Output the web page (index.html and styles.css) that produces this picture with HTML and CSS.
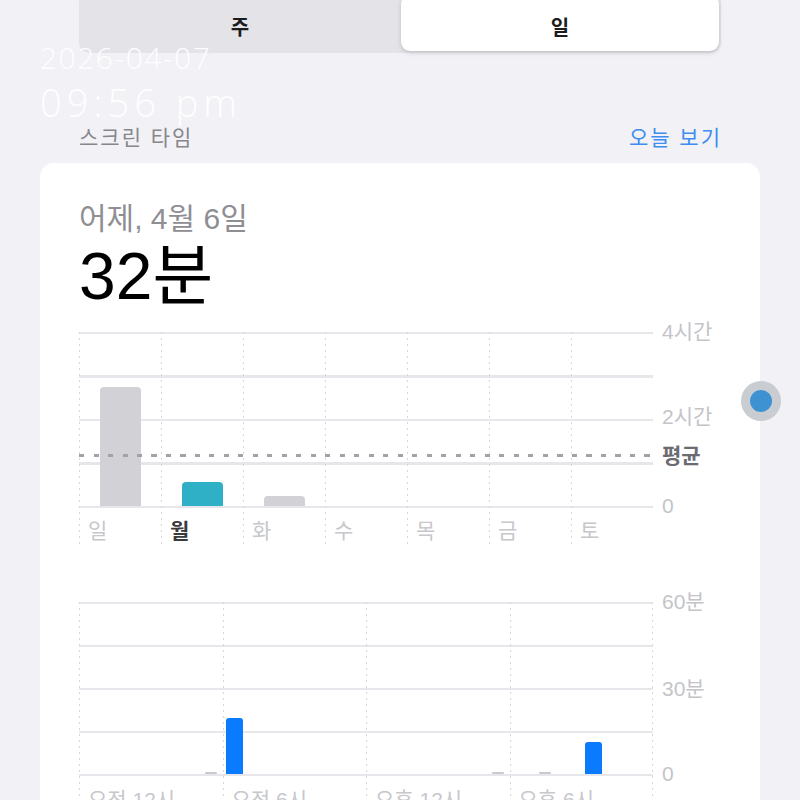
FILE: index.html
```html
<!DOCTYPE html>
<html lang="ko">
<head>
<meta charset="utf-8">
<title>스크린 타임</title>
<link rel="stylesheet" href="styles.css">
</head>
<body>
<div class="screen">
  <div class="segmented">
    <div class="seg">주</div>
    <div class="seg active">일</div>
  </div>

  <div class="section-head">
    <span class="section-title">스크린 타임</span>
    <span class="section-link">오늘 보기</span>
  </div>

  <div class="card">
    <div class="date">어제, 4월 6일</div>
    <div class="total">32분</div>

    <div class="chart week-chart">
      <div class="week-grid">
        <div class="wcol"><div class="wplot"><div class="bar gray" style="height:119px"></div></div><div class="xlabel">일</div></div>
        <div class="wcol"><div class="wplot"><div class="bar teal" style="height:24px"></div></div><div class="xlabel current">월</div></div>
        <div class="wcol"><div class="wplot"><div class="bar gray" style="height:10px"></div></div><div class="xlabel">화</div></div>
        <div class="wcol"><div class="wplot"></div><div class="xlabel">수</div></div>
        <div class="wcol"><div class="wplot"></div><div class="xlabel">목</div></div>
        <div class="wcol"><div class="wplot"></div><div class="xlabel">금</div></div>
        <div class="wcol"><div class="wplot"></div><div class="xlabel">토</div></div>
        <div class="avg-line"></div>
      </div>
      <div class="axis week-axis">
        <span class="tick t-4h">4시간</span>
        <span class="tick t-2h">2시간</span>
        <span class="tick t-avg">평균</span>
        <span class="tick t-0w">0</span>
      </div>
    </div>

    <div class="chart hour-chart">
      <div class="hour-grid">
        <div class="hcol">
          <div class="hplot">
            <div class="slot"></div><div class="slot"></div><div class="slot"></div><div class="slot"></div><div class="slot"></div>
            <div class="slot"><div class="hbar tiny"></div></div>
          </div>
          <div class="xlabel">오전 12시</div>
        </div>
        <div class="hcol">
          <div class="hplot">
            <div class="slot"><div class="hbar blue" style="height:56px"></div></div>
            <div class="slot"></div><div class="slot"></div><div class="slot"></div><div class="slot"></div><div class="slot"></div>
          </div>
          <div class="xlabel">오전 6시</div>
        </div>
        <div class="hcol">
          <div class="hplot">
            <div class="slot"></div><div class="slot"></div><div class="slot"></div><div class="slot"></div><div class="slot"></div>
            <div class="slot"><div class="hbar tiny"></div></div>
          </div>
          <div class="xlabel">오후 12시</div>
        </div>
        <div class="hcol">
          <div class="hplot">
            <div class="slot"></div>
            <div class="slot"><div class="hbar tiny"></div></div>
            <div class="slot"></div>
            <div class="slot"><div class="hbar blue" style="height:32px"></div></div>
            <div class="slot"></div><div class="slot"></div>
          </div>
          <div class="xlabel">오후 6시</div>
        </div>
      </div>
      <div class="axis hour-axis">
        <span class="tick t-60">60분</span>
        <span class="tick t-30">30분</span>
        <span class="tick t-0h">0</span>
      </div>
    </div>
  </div>

  <div class="stamp">
    <div class="stamp-date">2026-04-07</div>
    <div class="stamp-time">09:56 pm</div>
  </div>

  <div class="scrub-dot"><div class="scrub-core"></div></div>
</div>
</body>
</html>
```

FILE: styles.css
```css
* { box-sizing: border-box; }

html, body {
  margin: 0;
  padding: 0;
}

body {
  width: 800px;
  height: 800px;
  overflow: hidden;
  background: #f2f2f7;
  font-family: "Liberation Sans", "Noto Sans CJK KR", sans-serif;
  color: #1c1c1e;
}

.screen {
  position: relative;
  width: 800px;
  height: 800px;
  overflow: hidden;
  background: #f2f1f6;
}

/* segmented control */
.segmented {
  margin: -7px 79px 0 79px;
  height: 60px;
  padding: 2px;
  border-radius: 10px;
  background: #e3e3e8;
  display: grid;
  grid-template-columns: 1fr 1fr;
  gap: 2px;
}

.seg {
  display: flex;
  align-items: center;
  justify-content: center;
  padding-top: 6px;
  font-size: 20px;
  font-weight: 700;
  color: #1c1c1e;
  border-radius: 9px;
}

.seg.active {
  background: #ffffff;
  box-shadow: 0 2px 5px rgba(0, 0, 0, 0.14), 0 0 1px rgba(0, 0, 0, 0.1);
}

/* section header */
.section-head {
  margin: 73px 80px 0 79px;
  display: flex;
  justify-content: space-between;
  align-items: flex-end;
  line-height: 24px;
}

.section-title {
  font-size: 21px;
  letter-spacing: 2px;
  color: #86868b;
}

.section-link {
  font-size: 21px;
  letter-spacing: 2px;
  margin-right: -2px;
  color: #3d8ef0;
}

/* card */
.card {
  margin: 13px 40px 0 40px;
  height: 700px;
  background: #ffffff;
  border-radius: 14px;
  padding: 38px 0 0 39px;
}

.date {
  font-size: 30px;
  line-height: 36px;
  color: #8e8e93;
}

.total {
  margin-top: 4px;
  font-size: 66px;
  line-height: 70px;
  color: #000000;
}

/* charts */
.chart {
  display: grid;
  grid-template-columns: 574px 1fr;
  column-gap: 9px;
}

.week-chart {
  margin-top: 21px;
}

.hour-chart {
  margin-top: 58px;
}

.week-grid,
.hour-grid {
  position: relative;
  display: grid;
  background-repeat: no-repeat;
}

.week-grid {
  grid-template-columns: repeat(7, 1fr);
  background-image: repeating-linear-gradient(to bottom, #e6e6eb 0, #e6e6eb 2px, transparent 2px, transparent 43.5px);
  background-size: 100% 176px;
}

.hour-grid {
  grid-template-columns: repeat(4, 1fr);
  background-image: repeating-linear-gradient(to bottom, #e6e6eb 0, #e6e6eb 2px, transparent 2px, transparent 43px);
  background-size: 100% 174px;
}

.wcol,
.hcol {
  display: flex;
  flex-direction: column;
  background-image: repeating-linear-gradient(to bottom, #d6d6db 0, #d6d6db 2px, transparent 2px, transparent 6px);
  background-size: 1px 100%;
  background-repeat: no-repeat;
  background-position: left top;
}

.wcol:last-of-type,
.hcol:last-child {
  background-image:
    repeating-linear-gradient(to bottom, #d6d6db 0, #d6d6db 2px, transparent 2px, transparent 6px),
    repeating-linear-gradient(to bottom, #d6d6db 0, #d6d6db 2px, transparent 2px, transparent 6px);
  background-size: 1px 100%, 1px 100%;
  background-position: left top, right top;
}

.wplot {
  height: 174px;
  display: flex;
  align-items: flex-end;
  justify-content: center;
}

.bar {
  width: 41px;
  border-radius: 4px 4px 0 0;
}

.bar.gray { background: #d1d1d6; }
.bar.teal { background: #30b0c7; }

.xlabel {
  padding: 12px 0 0 9px;
  font-size: 21px;
  line-height: 26px;
  height: 38px;
  color: #c7c7cc;
  white-space: nowrap;
}

.xlabel.current {
  color: #3a3a3c;
  font-weight: 700;
}

.avg-line {
  position: absolute;
  left: 0;
  right: -2px;
  top: 122px;
  height: 3px;
  background-image: repeating-linear-gradient(to right, #a2a2a7 0, #a2a2a7 5px, transparent 5px, transparent 14.5px);
}

.hplot {
  height: 172px;
  display: flex;
}

.slot {
  flex: 1;
  display: flex;
  align-items: flex-end;
  justify-content: center;
}

.hbar {
  width: 17px;
  border-radius: 3px 3px 0 0;
}

.hbar.blue { background: #0a7aff; }
.hbar.tiny { height: 2px; width: 12px; background: #c9c9ce; border-radius: 1px; }

.hour-chart .xlabel {
  padding-top: 13px;
}

/* axis labels */
.axis {
  position: relative;
}

.tick {
  position: absolute;
  left: 0;
  font-size: 21px;
  line-height: 24px;
  color: #c4c4c9;
  white-space: nowrap;
}

.t-4h { top: -12px; }
.t-2h { top: 73px; }
.t-avg { top: 112px; color: #6c6c70; font-weight: 700; }
.t-0w { top: 162px; }

.t-60 { top: -12px; }
.t-30 { top: 75px; }
.t-0h { top: 160px; }

/* timestamp overlay */
.stamp {
  position: absolute;
  left: 40px;
  top: 40px;
  color: rgba(255, 255, 255, 0.97);
  font-family: "Open Sans", "Liberation Sans", sans-serif;
  font-weight: 300;
}

.stamp-date {
  font-size: 30px;
  line-height: 36px;
  letter-spacing: 1.5px;
}

.stamp-time {
  margin-top: 4px;
  font-size: 38px;
  line-height: 44px;
  letter-spacing: 5px;
}

/* scrubber dot */
.scrub-dot {
  position: absolute;
  left: 741px;
  top: 381px;
  width: 40px;
  height: 40px;
  border-radius: 50%;
  background: #c9ccd1;
  display: flex;
  align-items: center;
  justify-content: center;
}

.scrub-core {
  width: 22px;
  height: 22px;
  border-radius: 50%;
  background: #3f92d2;
}
```
